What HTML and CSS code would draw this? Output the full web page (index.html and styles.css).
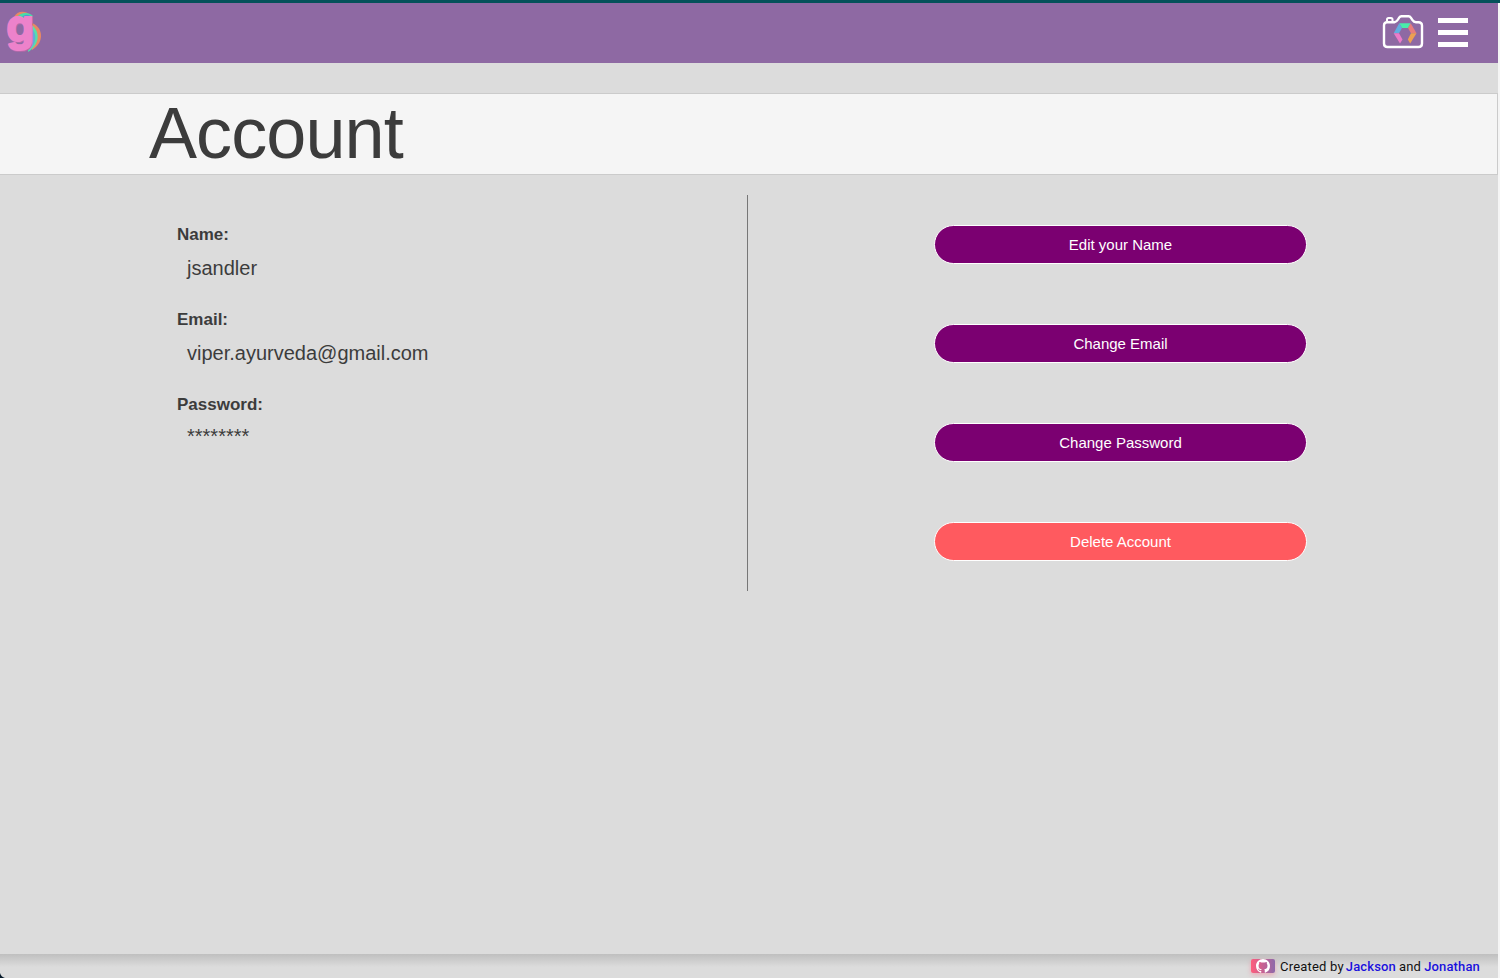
FILE: index.html
```html
<!DOCTYPE html>
<html lang="en">
<head>
<meta charset="utf-8">
<title>Account</title>
<link rel="stylesheet" href="styles.css">
</head>
<body>
<div class="app">
  <header class="navbar">
    <a class="logo" href="#" aria-label="Home">
      <svg width="46" height="60" viewBox="0 3 46 60">
        <path d="M14 17C17 11 25 10 30 15L27 18Z" fill="#e98a62"/>
        <path d="M17 17C21 12 29 12 33 16L29 19Z" fill="#46dfa9"/>
        <path d="M22 17C25 14 29 14 31 17L28 19Z" fill="#529bd4"/>
        <path d="M32 23C44 28 44 43 32 50Z" fill="#e98a62"/>
        <path d="M32 25C41 33 39 45 28 52Z" fill="#55dfab"/>
        <path d="M31 27C38 35 36 44 29 50Z" fill="#62a9d9"/>
        <text class="logo-shade" x="7" y="41.5">g</text>
        <text class="logo-letter" x="6.5" y="41">g</text>
      </svg>
    </a>
    <nav class="tools">
      <svg class="camera" width="42" height="36" viewBox="0 0 42 36">
        <path d="M5 8.2H12.5Q14.5 8 16 5.5L17.3 3.4Q18 2.2 19.5 2.2H26.5Q28 2.2 29 3.8L30.5 6.2Q31.8 8.2 34 8.2H36.5Q40 8.2 40 11.5V29.5Q40 33 36.5 33H5.5Q2 33 2 29.5V11.5Q2 8.2 5 8.2Z" fill="none" stroke="#fff" stroke-width="2.4"/>
        <path d="M5 7.5V5.5Q5 4 6.5 4H9Q10.5 4 10.5 5.5V7.5" fill="none" stroke="#fff" stroke-width="2"/>
        <path d="M17.2 9.3H28.7L26 14H20Z" fill="#49edaa"/>
        <path d="M17.2 9.3L20 14L17 19.2H11.7Z" fill="#62aee0"/>
        <path d="M28.7 9.3L34.5 19.2H29L26 14Z" fill="#e77c7d"/>
        <path d="M11.7 19.2H17L20.5 25.5L18 29.6Z" fill="#ec7bc9"/>
        <path d="M34.5 19.2H29L25.8 25.5L28.2 29.6Z" fill="#eda052"/>
      </svg>
      <button class="menu" aria-label="Menu"><span></span><span></span><span></span></button>
    </nav>
  </header>
  <section class="title-bar"><h1>Account</h1></section>
  <main class="account">
    <dl class="details">
      <dt>Name:</dt><dd>jsandler</dd>
      <dt>Email:</dt><dd>viper.ayurveda@gmail.com</dd>
      <dt>Password:</dt><dd class="password">********</dd>
    </dl>
    <div class="actions">
      <button class="action">Edit your Name</button>
      <button class="action">Change Email</button>
      <button class="action">Change Password</button>
      <button class="action danger">Delete Account</button>
    </div>
  </main>
  <footer class="footer">
    <span class="github">
      <svg width="16" height="14" viewBox="0 0 16 16" preserveAspectRatio="xMidYMid meet"><path fill="#fff" d="M8 0C3.58 0 0 3.58 0 8c0 3.54 2.29 6.53 5.47 7.59.4.07.55-.17.55-.38 0-.19-.01-.82-.01-1.49-2.01.37-2.53-.49-2.69-.94-.09-.23-.48-.94-.82-1.13-.28-.15-.68-.52-.01-.53.63-.01 1.08.58 1.23.82.72 1.21 1.87.87 2.33.66.07-.52.28-.87.51-1.07-1.78-.2-3.64-.89-3.64-3.95 0-.87.31-1.59.82-2.15-.08-.2-.36-1.02.08-2.12 0 0 .67-.21 2.2.82.64-.18 1.32-.27 2-.27s1.36.09 2 .27c1.53-1.04 2.2-.82 2.2-.82.44 1.1.16 1.92.08 2.12.51.56.82 1.27.82 2.15 0 3.07-1.87 3.75-3.65 3.95.29.25.54.73.54 1.48 0 1.07-.01 1.93-.01 2.2 0 .21.15.46.55.38A8 8 0 0 0 16 8c0-4.42-3.58-8-8-8z"/></svg>
    </span>
    <span class="created">Created by</span>
    <a class="first" href="#">Jackson</a>
    <span class="and">and</span>
    <a class="second" href="#">Jonathan</a>
    <svg class="corner" width="5" height="5" viewBox="0 0 5 5"><path d="M0 0Q1 4 5 5H0Z" fill="#071a2a"/></svg>
  </footer>
</div>
</body>
</html>
```
FILE: styles.css
```css
* { box-sizing: border-box; }
html { height: 100%; }
body {
  margin: 0;
  height: 100%;
  overflow: hidden;
  border-top: 3px solid #04515a;
  background: #f5f5f5;
  font-family: "Liberation Sans", Arial, sans-serif;
  color: #3c3c3c;
}
.app {
  display: flex;
  flex-direction: column;
  width: 1498px;
  height: 975px;
  background: #dcdcdc;
}
.navbar {
  display: flex;
  justify-content: space-between;
  flex: none;
  height: 60px;
  padding-right: 30px;
  background: #8e69a3;
}
.logo { display: block; height: 60px; }
.logo svg { overflow: visible; }
.logo text {
  font-family: Inter, "Liberation Sans", sans-serif;
  font-size: 43px;
  font-weight: 700;
  stroke-width: 2.2px;
  stroke-linejoin: round;
}
.logo-shade { fill: #b06aa8; stroke: #b06aa8; }
.logo-letter { fill: #ed82cb; stroke: #ed82cb; }
.tools { display: flex; gap: 14px; }
.camera { margin-top: 11px; }
.menu {
  display: flex;
  flex-direction: column;
  gap: 7px;
  width: 30px;
  margin: 15px 0 0;
  padding: 0;
  border: 0;
  background: none;
}
.menu span { width: 30px; height: 5px; background: #fff; }
.title-bar {
  flex: none;
  height: 82px;
  margin-top: 30px;
  padding-left: 149px;
  border: 1px solid #cbcbcb;
  border-left: 0;
  background: #f5f5f5;
}
h1 {
  margin: 0;
  font-size: 72px;
  font-weight: 400;
  line-height: 78px;
  letter-spacing: -.9px;
}
.account { display: flex; height: 396px; margin-top: 20px; }
.details {
  width: 748px;
  margin: 0;
  padding: 29px 0 0 177px;
  border-right: 1px solid #777;
}
.details dt { font-size: 17px; font-weight: 700; line-height: 21px; }
.details dd {
  height: 23px;
  margin: 12px 0 29px 10px;
  font-size: 20px;
  line-height: 23px;
}
.details .password { line-height: 19px; }
.actions {
  display: flex;
  flex: 1;
  flex-direction: column;
  align-items: center;
  gap: 60px;
  padding: 30px 5px 0 0;
}
.action {
  width: 373px;
  height: 39px;
  padding: 0;
  border: 1px solid #fff;
  border-radius: 20px;
  background: #7b0071;
  color: #fff;
  font: 15px "Liberation Sans", Arial, sans-serif;
}
.danger { background: #ff5a5f; }
.footer {
  display: flex;
  position: relative;
  align-items: center;
  justify-content: flex-end;
  height: 24px;
  margin-top: auto;
  padding-right: 18px;
  background: linear-gradient(#bfbfbf, #dcdcdc 13px);
  color: #111;
  font: 13px/22px Roboto, sans-serif;
  letter-spacing: .2px;
}
.footer a { color: #1a10dc; text-decoration: none; font-weight: 500; letter-spacing: .15px; }
.footer a, .created, .and { padding-top: 2px; }
.created { letter-spacing: .2px; }
.github {
  display: flex;
  align-items: center;
  justify-content: center;
  width: 24px;
  height: 14px;
  margin-right: 5px;
  border-radius: 2px;
  background: linear-gradient(90deg, #ff5c7c, #8d69aa);
  box-shadow: 0 2px 5px rgba(255, 92, 124, .4);
}
.first { margin-left: 2px; }
.and { margin-left: 3px; }
.second { margin-left: 3px; }
.corner { position: absolute; left: 0; bottom: 0; }
```
